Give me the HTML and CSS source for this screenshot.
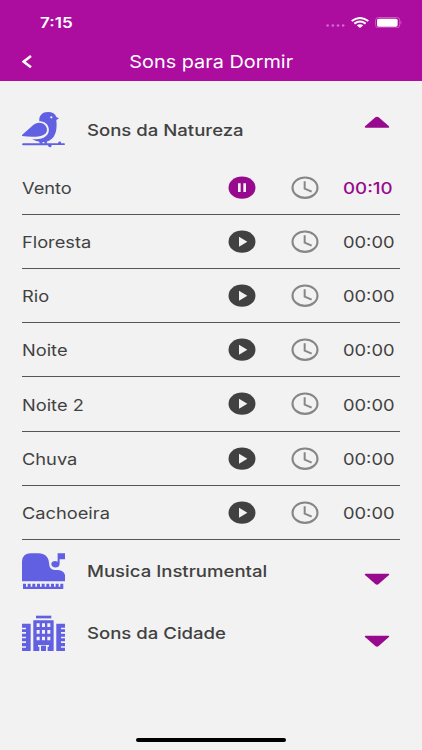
FILE: index.html
```
<!DOCTYPE html>
<html lang="pt-BR">
<head>
<meta charset="utf-8">
<title>Sons para Dormir</title>
<link rel="stylesheet" href="styles.css">
</head>
<body>
<svg class="defs" width="0" height="0">
  <symbol id="clock" viewBox="0 0 84 70"><ellipse cx="42" cy="35" rx="37.500" ry="30.500" fill="none" stroke="#868686" stroke-width="6.500"/><path d="M41 16v22l21 9" fill="none" stroke="#868686" stroke-width="6"/></symbol>
  <symbol id="play" viewBox="0 0 84 70"><ellipse cx="42" cy="35" rx="40.5" ry="33.5" fill="#414141"/><path d="M33 20v30l25-15z" fill="#f2f2f2"/></symbol>
  <symbol id="pause" viewBox="0 0 84 70"><ellipse cx="42" cy="35" rx="40.5" ry="33.5" fill="#980a8d"/><path d="M30 22h8v26h-8zM46 22h8v26h-8z" fill="#f2f2f2"/></symbol>
</svg>
<header class="top">
  <div class="status">
    <span class="clock-text">7:15</span>
    <div class="status-icons">
      <svg class="dots" viewBox="0 0 57 9"><g fill="#cf6bc9"><circle cx="5" cy="4.5" r="4"/><circle cx="20.500" cy="4.500" r="4"/><circle cx="36" cy="4.500" r="4"/><circle cx="51.500" cy="4.500" r="4"/></g></svg>
      <svg class="wifi" viewBox="0 0 54 34"><g fill="none" stroke="#fff" stroke-width="6"><path d="M2 12Q27-6 52 12"/><path d="M10 20Q27 7 44 20"/></g><path d="M17 25q10-7 20 0l-10 8z" fill="#fff"/></svg>
      <svg class="battery" viewBox="0 0 82 34"><rect x="1.500" y="1.500" width="73" height="31" rx="9" fill="none" stroke="#cf6bc9" stroke-width="2.500"/><rect x="6" y="5" width="62" height="24" rx="5" fill="#fff"/><path d="M77 12q5 5 0 10z" fill="#cf6bc9"/></svg>
    </div>
  </div>
  <div class="nav">
    <svg class="back" viewBox="0 0 30 40"><path d="M27 3L5 20l22 17" fill="none" stroke="#fff" stroke-width="7.500"/></svg>
    <h1><span>Sons para Dormir</span></h1>
  </div>
</header>
<main>
  <section>
    <div class="group first">
      <svg class="icon" viewBox="36 30 130 120"><g fill="#615fe2"><path d="M88 64C86 46 98 36 114 36q20 0 25 15l8 4-8 5c4 33-4 58-29 65l2 6h-8l-1-5h-6l2 5H89l-1-6q-12-1-22-8C98 122 121 106 116 84 112 68 98 64 88 64z"/><path d="M36 105L69 76C84 60 111 70 111 89c0 23-39 24-75 19z"/><path d="M39 130h105c2-9 11-6 9 0h10q4 3 0 5h-38c0 9-9 9-11 1H39q-6-3 0-6z"/></g><circle cx="124" cy="52" r="3.500" fill="#f2f2f2"/></svg>
      <h2><span>Sons da Natureza</span></h2>
      <svg class="arrow up" viewBox="0 0 78 38"><path d="M5 35Q0 35 4 30L34 4q5-4 10 0l30 26q4 5-1 5z" fill="#980a8d"/></svg>
    </div>
    <ul>
      <li class="active"><span class="name">Vento</span><svg class="control"><use href="#pause"/></svg><svg class="timer"><use href="#clock"/></svg><span class="time">00:10</span></li>
      <li><span class="name">Floresta</span><svg class="control"><use href="#play"/></svg><svg class="timer"><use href="#clock"/></svg><span class="time">00:00</span></li>
      <li><span class="name">Rio</span><svg class="control"><use href="#play"/></svg><svg class="timer"><use href="#clock"/></svg><span class="time">00:00</span></li>
      <li><span class="name">Noite</span><svg class="control"><use href="#play"/></svg><svg class="timer"><use href="#clock"/></svg><span class="time">00:00</span></li>
      <li><span class="name">Noite 2</span><svg class="control"><use href="#play"/></svg><svg class="timer"><use href="#clock"/></svg><span class="time">00:00</span></li>
      <li><span class="name">Chuva</span><svg class="control"><use href="#play"/></svg><svg class="timer"><use href="#clock"/></svg><span class="time">00:00</span></li>
      <li><span class="name">Cachoeira</span><svg class="control"><use href="#play"/></svg><svg class="timer"><use href="#clock"/></svg><span class="time">00:00</span></li>
    </ul>
  </section>
  <section class="group">
    <svg class="icon" viewBox="36 33 130 120"><g fill="#615fe2"><path d="M36 124V64Q38 40 62 40h24c18 0 30 11 31 28q1 22 17 22h10q22 2 22 23v11z"/><path d="M143 40h23v18h-17v13c0 16-25 14-25 2 0-10 12-12 19-8z"/><path d="M39 131h9v9h5v-9h9v9h5v-9h9v9h5v-9h9v9h5v-9h9v9h5v-9h9v9h5v-9h9v9h5v-9h9v9h5v-9h9v16H39z"/></g></svg>
    <h2><span>Musica Instrumental</span></h2>
    <svg class="arrow down" viewBox="0 0 78 38"><path d="M5 2Q0 2 4 7l30 26q5 4 10 0L74 7q4-5-1-5z" fill="#980a8d"/></svg>
  </section>
  <section class="group">
    <svg class="icon" viewBox="36 39 130 120"><g fill="#615fe2"><path d="M78 47h46v8H78z"/><path fill-rule="evenodd" d="M70 61h61v92h-18v-13h4v-5H84v5h4v13H70zM80 70v11h9V70zm16 0v11h9V70zm16 0v11h9V70zM80 90v11h9V90zm16 0v11h9V90zm16 0v11h9V90zM80 110v11h9v-11zm16 0v11h9v-11zm16 0v11h9v-11z"/><path d="M93 137h15v16H93z"/><path d="M36 71h26v82H36v-10h12v-4H36v-10h12v-5H36v-9h12v-5H36v-9h12v-5H36v-8h12v-5H36z"/><path d="M165 71h-26v82h26v-10h-12v-4h12v-10h-12v-5h12v-9h-12v-5h12v-9h-12v-5h12v-8h-12v-5h12z"/></g></svg>
    <h2><span>Sons da Cidade</span></h2>
    <svg class="arrow down" viewBox="0 0 78 38"><path d="M5 2Q0 2 4 7l30 26q5 4 10 0L74 7q4-5-1-5z" fill="#980a8d"/></svg>
  </section>
</main>
<footer><div class="home-bar"></div></footer>
</body>
</html>
```
FILE: styles.css
```
* { box-sizing: border-box; }
body { margin: 0; width: 422px; height: 750px; background: #f2f2f2; color: #414141; font-family: Inter, "Liberation Sans", sans-serif; display: flex; flex-direction: column; overflow: hidden; }
svg { display: block; flex: none; }
.defs { position: absolute; }
.top { height: 81px; flex: none; background: #ac0d9f; color: #fff; }
.status { height: 42px; padding: 3px 20px 0 40px; display: flex; align-items: center; justify-content: space-between; }
.clock-text { font-size: 14px; font-weight: 600; transform: scaleX(1.22); transform-origin: left; }
.status-icons { display: flex; align-items: center; }
.dots { width: 19px; height: 3px; margin: 7px 6px 0 0; }
.wifi { width: 18px; height: 11.300px; margin-right: 6px; }
.battery { width: 27.300px; height: 11.300px; }
.nav { height: 39px; padding-left: 22px; display: flex; align-items: center; }
.back { width: 10px; height: 13.300px; }
h1 { flex: 1; margin: 0 32px 0 0; text-align: center; font-size: 17.500px; font-weight: 400; line-height: 38px; }
h1 span { display: inline-block; transform: scaleX(1.135); }
main { flex: 1; padding: 0 22px; }
.group { height: 62.300px; display: flex; align-items: center; }
.group.first { height: 79.800px; padding-top: 18px; }
.icon { width: 43.300px; height: 40px; }
h2 { flex: 1; margin: 0 0 0 22px; font-size: 16px; font-weight: 500; line-height: 24px; white-space: nowrap; }
h2 span { display: inline-block; transform: scaleX(1.16); transform-origin: left; }
.arrow { width: 26px; height: 12.700px; margin-right: 10px; }
.up { margin-top: -15px; }
.down { margin-top: 16px; }
ul { margin: 0; padding: 0; list-style: none; }
li { height: 54.170px; border-bottom: 1px solid #555; display: grid; grid-template-columns: 206px 63px 51.500px 57.500px; align-items: center; font-size: 16px; }
.name, .time { justify-self: start; padding-top: 1px; transform: scaleX(1.14); transform-origin: left; white-space: nowrap; }
.time { transform: scaleX(1.145); }
.control, .timer { width: 28px; height: 23.300px; }
.active .time { color: #980a8d; font-weight: 500; transform: scaleX(1.17); }
footer { height: 16px; display: flex; justify-content: center; align-items: center; margin-bottom: 2px; }
.home-bar { width: 150px; height: 4px; border-radius: 2px; background: #000; }
```
